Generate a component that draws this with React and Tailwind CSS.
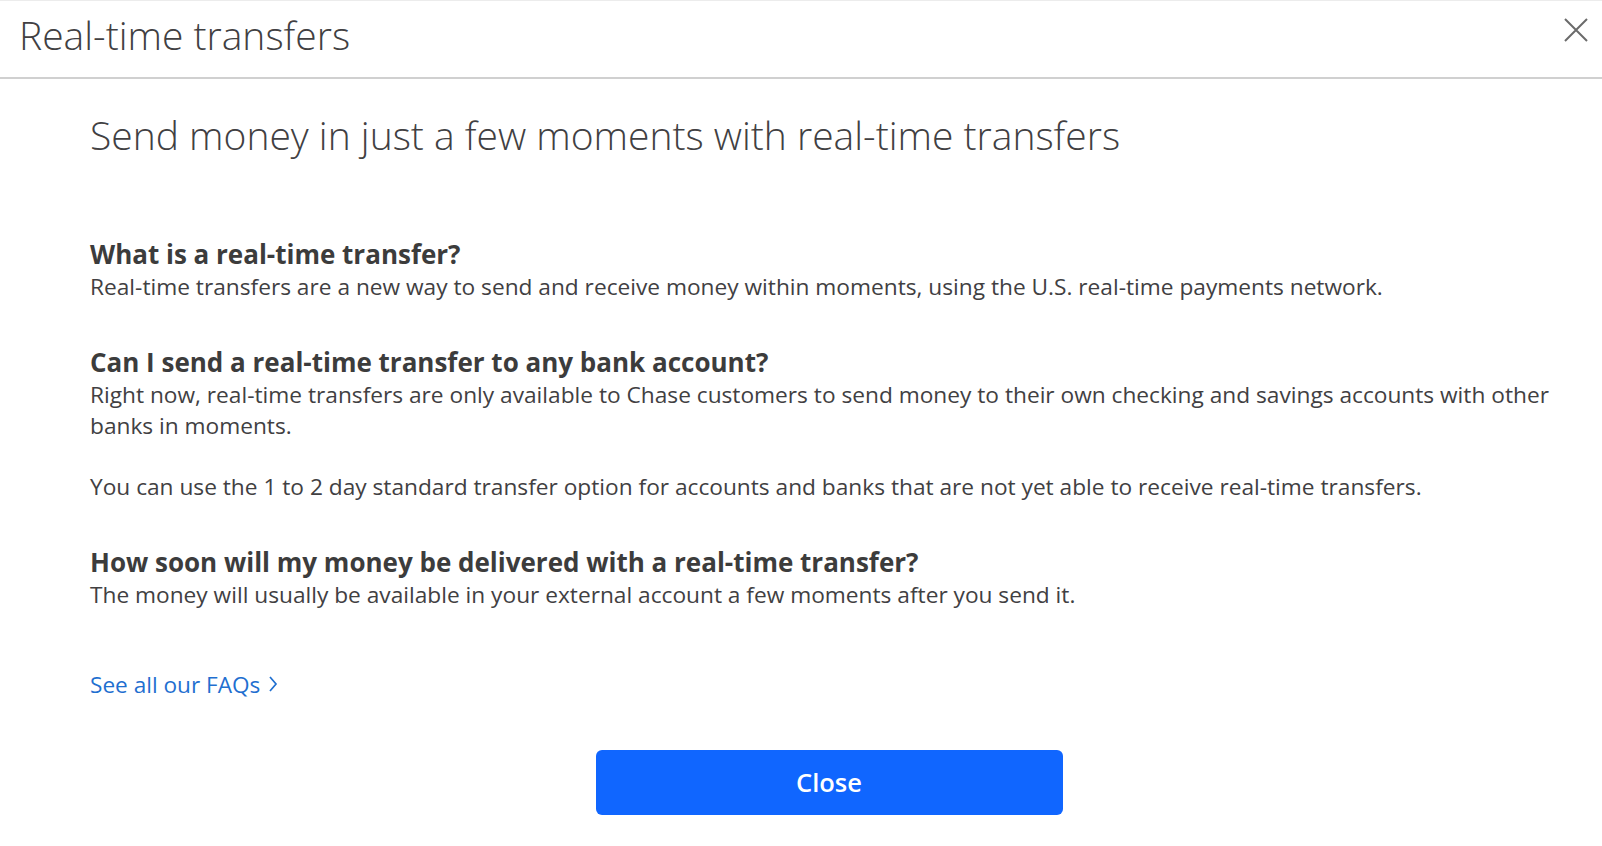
const FONT = "'Open Sans', 'Noto Sans', sans-serif"

const faqs = [
  {
    q: 'What is a real-time transfer?',
    a: ['Real-time transfers are a new way to send and receive money within moments, using the U.S. real-time payments network.'],
  },
  {
    q: 'Can I send a real-time transfer to any bank account?',
    a: [
      'Right now, real-time transfers are only available to Chase customers to send money to their own checking and savings accounts with other banks in moments.',
      'You can use the 1 to 2 day standard transfer option for accounts and banks that are not yet able to receive real-time transfers.',
    ],
  },
  {
    q: 'How soon will my money be delivered with a real-time transfer?',
    a: ['The money will usually be available in your external account a few moments after you send it.'],
  },
]

export default function App() {
  return (
    <div style={{ fontFamily: FONT }} className="w-[1602px] h-[846px] bg-white text-[#414042] overflow-hidden">
      {/* Header */}
      <div className="h-[79px] border-t border-[#ececec] border-b-2 border-b-[#d0d0d0] flex items-start justify-between pl-[19px] pr-[14px]">
        <h1 className="mt-[10px] text-[39px] font-light leading-[48px] text-[#414042]">Real-time transfers</h1>
        <button className="mt-[17px] w-[24px] h-[24px] text-[#6b6b6b]">
          <svg width="24" height="24" viewBox="0 0 24 24" fill="none" stroke="currentColor" strokeWidth="2">
            <path d="M1 1l22 22M23 1L1 23" />
          </svg>
        </button>
      </div>

      {/* Body */}
      <div className="pl-[90px] pr-[40px] pt-[30px]">
        <h2 className="text-[39px] font-light leading-[52px]">
          Send money in just a few moments with real-time transfers
        </h2>

        <div className="mt-[77px] flex flex-col gap-[43.5px]">
          {faqs.map((f, i) => (
            <div key={i}>
              <h3 className="text-[26px] font-bold leading-[33px] text-[#3c3c3c]">{f.q}</h3>
              <div className="mt-[1px] flex flex-col gap-[30px]">
                {f.a.map((p, j) => (
                  <p key={j} className="text-[22.7px] leading-[30.7px]">{p}</p>
                ))}
              </div>
            </div>
          ))}
        </div>

        <a href="#" className="mt-[58px] inline-flex items-center gap-[8px] text-[22.6px] leading-[31px] text-[#1f6fd0]">
          See all our FAQs
          <svg width="10" height="18" viewBox="0 0 10 18" fill="none" stroke="currentColor" strokeWidth="1.7">
            <path d="M2 2l6 7-6 7" />
          </svg>
        </a>
      </div>

      <div className="mt-[50px] flex justify-center pl-[56px]">
        <button className="w-[467px] h-[65px] rounded-[6px] bg-[#1066ff] text-white text-[25.5px] font-semibold">
          Close
        </button>
      </div>
    </div>
  )
}
